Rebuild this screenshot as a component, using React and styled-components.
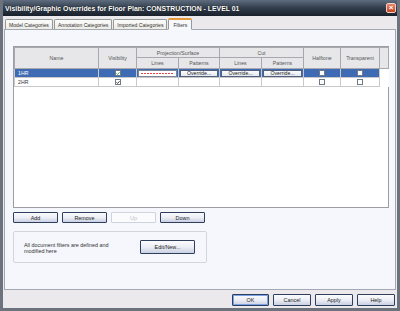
import React from "react";
import styled, { createGlobalStyle } from "styled-components";

const GlobalStyle = createGlobalStyle`
  html, body {
    margin: 0;
    padding: 0;
    background: #ebe9ec;
  }
  * {
    box-sizing: border-box;
  }
`;

const Window = styled.div`
  width: 400px;
  height: 311px;
  display: flex;
  flex-direction: column;
  background: #ebe9ec;
  border-left: 3px solid #6d737c;
  border-right: 3px solid #6d737c;
  border-bottom: 3px solid #6d737c;
  font-family: "Liberation Sans", "DejaVu Sans", sans-serif;
  color: #222;
  overflow: hidden;
`;

const TitleBar = styled.div`
  height: 16px;
  margin: 0 -3px;
  padding: 0 4px 0 5px;
  display: flex;
  align-items: center;
  background: linear-gradient(#5f6d80 0%, #35414f 45%, #18202b 100%);
  color: #fff;
  font-weight: bold;
  font-size: 6.9px;
`;

const Title = styled.span`
  flex: 1;
  white-space: nowrap;
  text-shadow: 0 0 1px #000;
`;

const CloseBox = styled.div`
  width: 10px;
  height: 10px;
  border: 1px solid #f2d2c8;
  border-radius: 2px;
  background: linear-gradient(#e9846a, #c8421f);
  color: #fff;
  font-size: 8px;
  line-height: 8px;
  text-align: center;
  font-weight: bold;
`;

const Body = styled.div`
  flex: 1;
  display: flex;
  flex-direction: column;
  padding: 1px 1px 0 1px;
`;

const TabStrip = styled.div`
  display: flex;
  align-items: flex-end;
  height: 12px;
  padding-left: 1px;
  position: relative;
  z-index: 1;
`;

const Tab = styled.div`
  height: ${({ $active }) => ($active ? "12px" : "10px")};
  margin-right: 1px;
  padding: 0 ${({ $active }) => ($active ? "4px" : "3px")};
  display: flex;
  align-items: center;
  font-size: 5.1px;
  color: #333;
  white-space: nowrap;
  border: 1px solid #919b9c;
  border-bottom: ${({ $active }) => ($active ? "1px solid #f7f8fc" : "none")};
  border-top: ${({ $active }) => ($active ? "2px solid #e89a38" : "1px solid #919b9c")};
  border-radius: 2px 2px 0 0;
  background: ${({ $active }) =>
    $active ? "#f7f8fc" : "linear-gradient(#fbfbfa, #ecebe6)"};
  margin-bottom: ${({ $active }) => ($active ? "-1px" : "0")};
`;

const Panel = styled.div`
  height: 261px;
  display: flex;
  flex-direction: column;
  background: #f6f7fc;
  border: 1px solid #a3a9b3;
  padding: 16px 0 0 8px;
`;

const Grid = styled.div`
  width: 376px;
  height: 162px;
  border: 1px solid #9c9ea3;
  background: #fff;
`;

const Table = styled.table`
  border-collapse: collapse;
  table-layout: fixed;
  width: 374px;
  font-size: 5.2px;
  color: #555;
`;

const HeadCell = styled.th`
  font-weight: normal;
  background: #e7e7ea;
  border: 1px solid #a8a8ae;
  text-align: center;
  padding: 0;
  height: ${({ $h }) => $h || 10}px;
  white-space: nowrap;
  overflow: hidden;
`;

const Row = styled.tr`
  background: ${({ $selected }) => ($selected ? "#3e6bb4" : "#fff")};
  color: ${({ $selected }) => ($selected ? "#fff" : "#333")};
`;

const Cell = styled.td`
  height: 9px;
  padding: 0 ${({ $pad }) => ($pad ? "3px" : "1px")};
  border: 1px solid #c9c9cc;
  text-align: ${({ $left }) => ($left ? "left" : "center")};
  vertical-align: middle;
  white-space: nowrap;
  overflow: hidden;
`;

const FillerCell = styled.td`
  background: #fff;
  border: none;
`;

const Check = styled.span`
  display: inline-flex;
  align-items: center;
  justify-content: center;
  width: 6px;
  height: 6px;
  background: #fff;
  border: 1px solid #6f7a88;
  vertical-align: middle;
`;

const LineSwatch = styled.div`
  height: 7px;
  background: #fff;
  border: 1px solid #7d8590;
  display: flex;
  align-items: center;
  padding: 0 2px;
  &::after {
    content: "";
    flex: 1;
    height: 1px;
    background: repeating-linear-gradient(90deg, #e8434c 0 2px, transparent 2px 3px);
  }
`;

const OverrideBtn = styled.div`
  height: 7px;
  background: linear-gradient(#fdfdfe, #e5e7ef);
  border: 1px solid #50607c;
  font-size: 5.2px;
  line-height: 5px;
  color: #222;
  text-align: center;
`;

const ButtonRow = styled.div`
  display: flex;
  gap: 4px;
  margin-top: 4px;
`;

const Button = styled.div`
  width: ${({ $w }) => $w || 45}px;
  height: ${({ $h }) => $h || 11}px;
  display: flex;
  align-items: center;
  justify-content: center;
  font-size: 5.4px;
  color: ${({ $disabled }) => ($disabled ? "#b9bcc4" : "#222")};
  border: 1px solid ${({ $disabled }) => ($disabled ? "#cfd3dc" : "#2f3e5c")};
  border-radius: 1px;
  background: ${({ $disabled }) =>
    $disabled ? "#fbfbfd" : "linear-gradient(#fbfbfd 0%, #eceef5 50%, #c9d0e2 100%)"};
  box-shadow: ${({ $default }) => ($default ? "inset 0 0 0 1px #7aa3e6" : "none")};
`;

const GroupBox = styled.div`
  width: 194px;
  height: 32px;
  margin-top: 8px;
  border: 1px solid #d3d5dc;
  border-radius: 2px;
  display: flex;
  align-items: center;
  padding: 0 11px 0 10px;
  justify-content: space-between;
`;

const Note = styled.div`
  font-size: 5.4px;
  line-height: 6.4px;
  color: #333;
  margin-top: 2px;
`;

const Footer = styled.div`
  flex: 1;
  display: flex;
  justify-content: flex-end;
  align-items: flex-start;
  gap: 4px;
  padding: 4px 1px 0 0;
`;

function CheckMark({ color }) {
  return (
    <svg width="5" height="5" viewBox="0 0 5 5">
      <path d="M0.6 2.4 L1.9 3.7 L4.4 0.9" stroke={color} strokeWidth="1.1" fill="none" />
    </svg>
  );
}

const tabs = ["Model Categories", "Annotation Categories", "Imported Categories", "Filters"];

const filters = [
  { name: "1HR", selected: true },
  { name: "2HR", selected: false },
];

export default function App() {
  return (
    <>
      <GlobalStyle />
      <Window>
        <TitleBar>
          <Title>Visibility/Graphic Overrides for Floor Plan: CONSTRUCTION - LEVEL 01</Title>
          <CloseBox>×</CloseBox>
        </TitleBar>
        <Body>
          <TabStrip>
            {tabs.map((t) => (
              <Tab key={t} $active={t === "Filters"}>
                {t}
              </Tab>
            ))}
          </TabStrip>
          <Panel>
            <Grid>
              <Table>
                <colgroup>
                  <col style={{ width: 84 }} />
                  <col style={{ width: 38 }} />
                  <col style={{ width: 42 }} />
                  <col style={{ width: 41 }} />
                  <col style={{ width: 42 }} />
                  <col style={{ width: 42 }} />
                  <col style={{ width: 37 }} />
                  <col style={{ width: 39 }} />
                  <col style={{ width: 9 }} />
                </colgroup>
                <thead>
                  <tr>
                    <HeadCell rowSpan={2}>Name</HeadCell>
                    <HeadCell rowSpan={2}>Visibility</HeadCell>
                    <HeadCell colSpan={2}>Projection/Surface</HeadCell>
                    <HeadCell colSpan={2}>Cut</HeadCell>
                    <HeadCell rowSpan={2}>Halftone</HeadCell>
                    <HeadCell rowSpan={2}>Transparent</HeadCell>
                    <HeadCell rowSpan={2} />
                  </tr>
                  <tr>
                    <HeadCell $h={11}>Lines</HeadCell>
                    <HeadCell $h={11}>Patterns</HeadCell>
                    <HeadCell $h={11}>Lines</HeadCell>
                    <HeadCell $h={11}>Patterns</HeadCell>
                  </tr>
                </thead>
                <tbody>
                  {filters.map((f) => (
                    <Row key={f.name} $selected={f.selected}>
                      <Cell $left $pad>{f.name}</Cell>
                      <Cell>
                        <Check>
                          <CheckMark color={f.selected ? "#22a52a" : "#222"} />
                        </Check>
                      </Cell>
                      <Cell>{f.selected && <LineSwatch />}</Cell>
                      <Cell>{f.selected && <OverrideBtn>Override...</OverrideBtn>}</Cell>
                      <Cell>{f.selected && <OverrideBtn>Override...</OverrideBtn>}</Cell>
                      <Cell>{f.selected && <OverrideBtn>Override...</OverrideBtn>}</Cell>
                      <Cell>
                        <Check />
                      </Cell>
                      <Cell>
                        <Check />
                      </Cell>
                      <FillerCell />
                    </Row>
                  ))}
                </tbody>
              </Table>
            </Grid>
            <ButtonRow>
              <Button>Add</Button>
              <Button>Remove</Button>
              <Button $disabled>Up</Button>
              <Button>Down</Button>
            </ButtonRow>
            <GroupBox>
              <Note>
                All document filters are defined and
                <br />
                modified here
              </Note>
              <Button $w={55} $h={14}>
                Edit/New...
              </Button>
            </GroupBox>
          </Panel>
          <Footer>
            <Button $w={37} $h={12} $default>
              OK
            </Button>
            <Button $w={38} $h={12}>
              Cancel
            </Button>
            <Button $w={38} $h={12}>
              Apply
            </Button>
            <Button $w={38} $h={12}>
              Help
            </Button>
          </Footer>
        </Body>
      </Window>
    </>
  );
}
